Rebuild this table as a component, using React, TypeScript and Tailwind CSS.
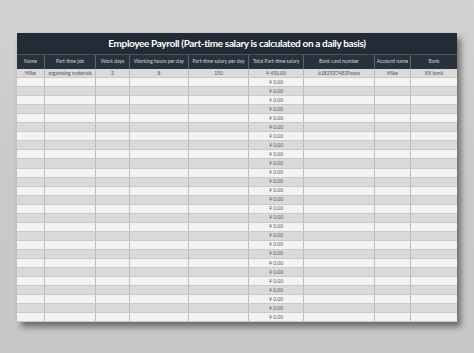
import React from "react";

const cols = "grid-cols-[28px_51px_34px_59px_60px_55px_71px_36px_46px]";

const headers = [
  "Name",
  "Part time job",
  "Work days",
  "Working hours per day",
  "Part-time salary per day",
  "Total Part-time salary",
  "Bank card number",
  "Account name",
  "Bank",
];

const first = [
  "Mike",
  "organising materials",
  "3",
  "8",
  "150",
  "¥ 450.00",
  "61829374839xxxx",
  "Mike",
  "XX bank",
];

export default function App() {
  const rows: string[][] = [first];
  for (let i = 0; i < 27; i++) {
    rows.push(["", "", "", "", "", "¥ 0.00", "", "", ""]);
  }
  return (
    <div
      className="w-[474px] h-[353px] overflow-hidden bg-gradient-to-b from-[#d2d2d2] via-[#c9c9c9] to-[#c7c7c7] pl-[17px] pt-[33px]"
      style={{ fontFamily: "Lato, 'Open Sans', sans-serif" }}
    >
      <div className="w-[440px] h-[289px] overflow-hidden bg-[#f2f2f2] shadow-[4px_5px_6px_rgba(0,0,0,0.45)] flex flex-col">
        <div className="h-[22px] shrink-0 bg-[#232b36] flex items-center justify-center text-white font-bold text-[10px] tracking-[-0.35px] border-b border-[#4b535d]">
          Employee Payroll (Part-time salary is calculated on a daily basis)
        </div>
        <div className={`grid ${cols} h-[14px] shrink-0 bg-[#29313c]`}>
          {headers.map((h, i) => (
            <div
              key={i}
              className={`flex items-center justify-center text-[5px] text-[#d3d7db] whitespace-nowrap ${
                i < headers.length - 1 ? "border-r border-[#5d656f]" : ""
              }`}
            >
              {h}
            </div>
          ))}
        </div>
        {rows.map((r, ri) => (
          <div
            key={ri}
            className={`grid ${cols} h-[9.06px] shrink-0 border-b border-[#c9c9c9] ${
              ri % 2 === 0 ? "bg-[#dadada]" : "bg-[#f3f3f3]"
            }`}
          >
            {r.map((c, ci) => (
              <div
                key={ci}
                className={`flex items-center justify-center text-[5px] leading-none text-[#555] whitespace-nowrap ${
                  ci < r.length - 1 ? "border-r border-[#bcbcbc]" : ""
                }`}
              >
                {c}
              </div>
            ))}
          </div>
        ))}
      </div>
    </div>
  );
}
